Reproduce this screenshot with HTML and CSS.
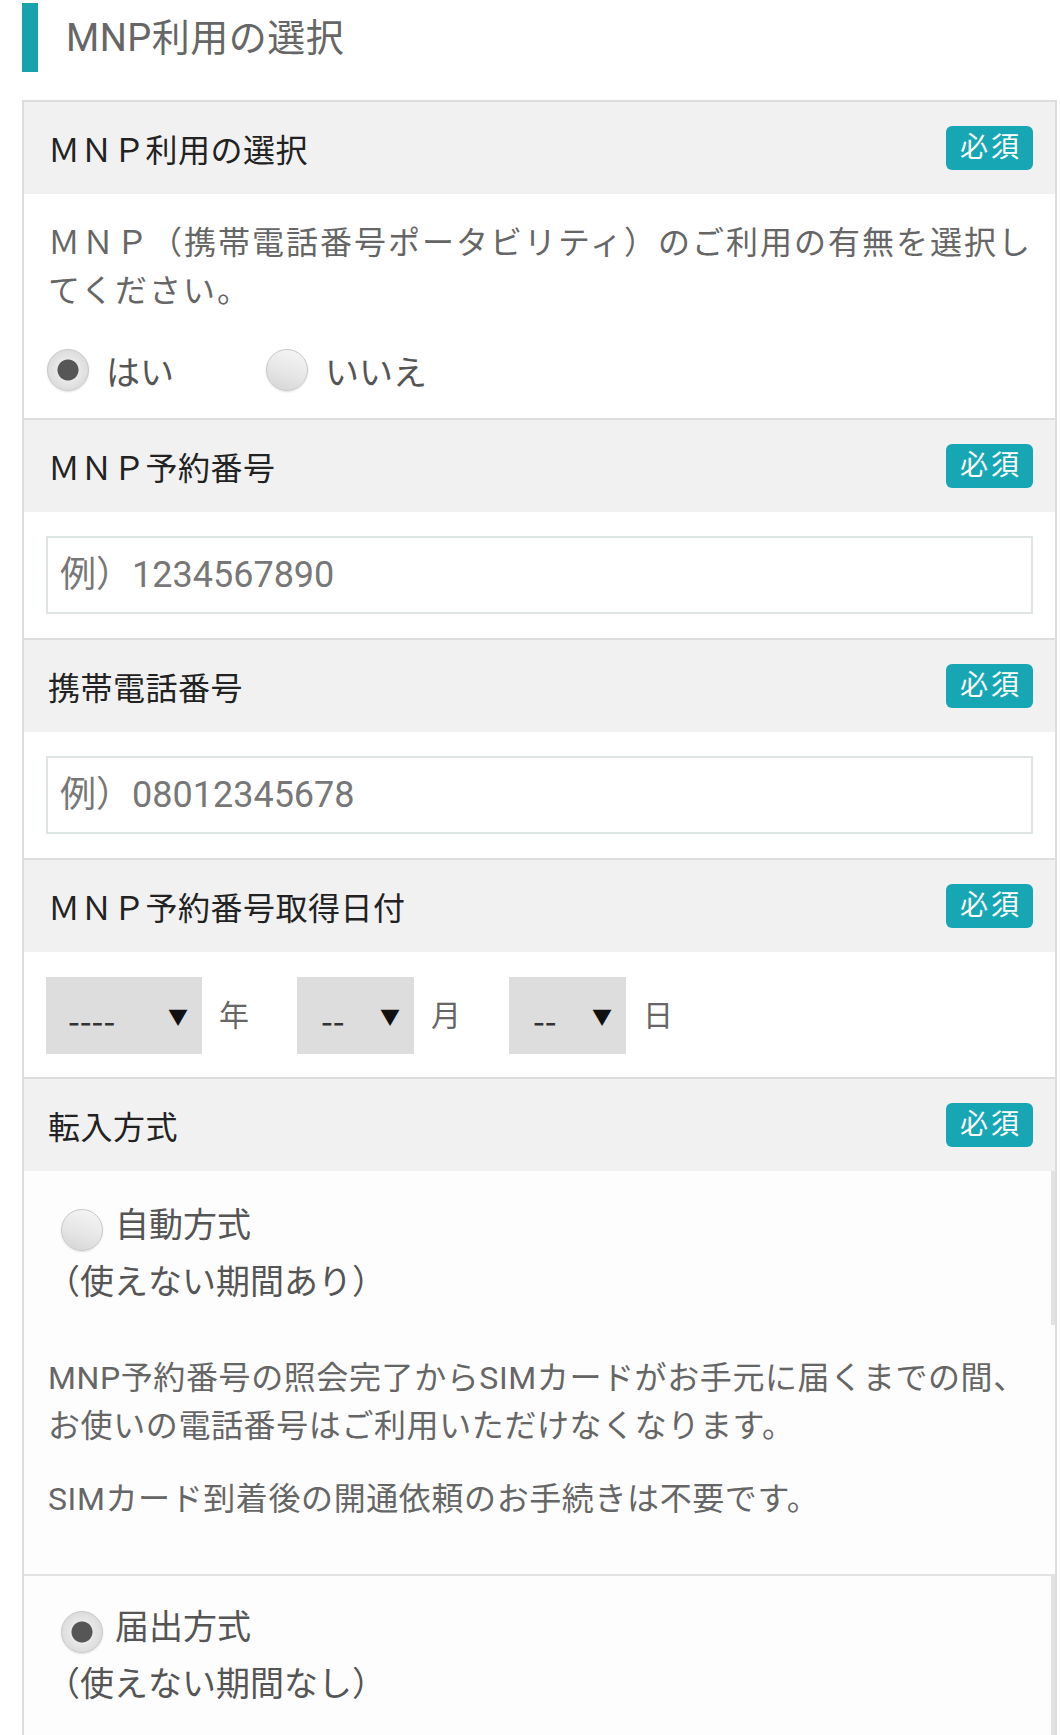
FILE: index.html
```html
<!DOCTYPE html>
<html lang="ja">
<head>
<meta charset="utf-8">
<title>MNP利用の選択</title>
<link rel="stylesheet" href="styles.css">
</head>
<body>
<div class="page">
  <h1 class="title">MNP利用の選択</h1>

  <div class="form">
    <section class="section">
      <div class="sec-head">
        <h2>ＭＮＰ利用の選択</h2>
        <span class="badge">必須</span>
      </div>
      <div class="sec-body sec-body-mnp">
        <p class="desc">ＭＮＰ（携帯電話番号ポータビリティ）のご利用の有無を選択し<br>てください。</p>
        <div class="choices">
          <label class="choice"><input class="radio" type="radio" name="mnp" checked><span>はい</span></label>
          <label class="choice"><input class="radio" type="radio" name="mnp"><span>いいえ</span></label>
        </div>
      </div>
    </section>

    <section class="section">
      <div class="sec-head">
        <h2>ＭＮＰ予約番号</h2>
        <span class="badge">必須</span>
      </div>
      <div class="sec-body sec-body-input">
        <input class="text-input" type="text" placeholder="例）1234567890">
      </div>
    </section>

    <section class="section">
      <div class="sec-head">
        <h2>携帯電話番号</h2>
        <span class="badge">必須</span>
      </div>
      <div class="sec-body sec-body-input">
        <input class="text-input" type="text" placeholder="例）08012345678">
      </div>
    </section>

    <section class="section">
      <div class="sec-head">
        <h2>ＭＮＰ予約番号取得日付</h2>
        <span class="badge">必須</span>
      </div>
      <div class="sec-body sec-body-date">
        <div class="select select-year">
          <select><option>----</option></select>
          <span class="arrow">▼</span>
        </div>
        <span class="unit">年</span>
        <div class="select select-short">
          <select><option>--</option></select>
          <span class="arrow">▼</span>
        </div>
        <span class="unit">月</span>
        <div class="select select-short">
          <select><option>--</option></select>
          <span class="arrow">▼</span>
        </div>
        <span class="unit">日</span>
      </div>
    </section>

    <section class="section">
      <div class="sec-head">
        <h2>転入方式</h2>
        <span class="badge">必須</span>
      </div>
      <div class="sec-body sec-body-method">
        <div class="option">
          <label class="option-head"><input class="radio radio-inline" type="radio" name="method"><span class="option-name">自動方式</span><br>（使えない期間あり）</label>
          <div class="option-desc">
            <p>MNP予約番号の照会完了からSIMカードがお手元に届くまでの間、<br>お使いの電話番号はご利用いただけなくなります。</p>
            <p>SIMカード到着後の開通依頼のお手続きは不要です。</p>
          </div>
        </div>
        <div class="option option-second">
          <label class="option-head"><input class="radio radio-inline" type="radio" name="method" checked><span class="option-name">届出方式</span><br>（使えない期間なし）</label>
        </div>
      </div>
    </section>
  </div>
</div>
</body>
</html>
```

FILE: styles.css
```css
* {
  box-sizing: border-box;
}

body {
  margin: 0;
  background: #ffffff;
  font-family: Roboto, "Noto Sans CJK JP", "Noto Sans", sans-serif;
  color: #333;
}

.page {
  padding: 3px 3px 0 22px;
}

.title {
  display: flex;
  align-items: center;
  height: 69px;
  margin: 0 0 28px;
  padding-left: 28px;
  border-left: 16px solid #17a2ad;
  font-size: 38px;
  font-weight: normal;
  color: #666;
  line-height: 1;
  letter-spacing: 0.5px;
}

.form {
  border: 2px solid #dddddd;
}

.section + .section {
  border-top: 2px solid #dddddd;
}

.sec-head {
  height: 92px;
  background: #f1f1f1;
  display: flex;
  align-items: center;
  justify-content: space-between;
  padding: 0 22px 0 24px;
}

.sec-head h2 {
  margin: 0;
  font-size: 32px;
  font-weight: normal;
  color: #222;
  letter-spacing: 0.5px;
}

.badge {
  width: 87px;
  height: 44px;
  border-radius: 6px;
  background: #17a6b3;
  color: #fff;
  font-size: 28px;
  letter-spacing: 3px;
  padding-left: 3px;
  display: flex;
  align-items: center;
  justify-content: center;
  line-height: 1;
}

.sec-body-mnp {
  padding: 25px 10px 28px 24px;
}

.desc {
  margin: 0 0 35px;
  font-size: 32px;
  line-height: 48px;
  letter-spacing: 2px;
  color: #666;
  white-space: nowrap;
}

.choices {
  display: flex;
  align-items: center;
  height: 40px;
}

.choice {
  display: flex;
  align-items: center;
  gap: 17px;
  width: 220px;
  margin-left: -1px;
  font-size: 34px;
  color: #555;
}

.radio {
  appearance: none;
  -webkit-appearance: none;
  width: 42px;
  height: 42px;
  margin: 0;
  flex: none;
  border-radius: 50%;
  border: 1px solid #c9c9c9;
  background: linear-gradient(200deg, #f7f7f7 0%, #e6e6e6 55%, #d4d4d4 100%);
  box-shadow: 0 1px 2px rgba(0, 0, 0, 0.12);
}

.radio:checked {
  background:
    radial-gradient(circle, #565656 0 10px, #e9e9e9 11px, #e4e4e4 14px, #d2d2d2 100%);
}

.sec-body-input {
  padding: 24px 22px 24px 22px;
}

.text-input {
  display: block;
  width: 100%;
  height: 78px;
  margin: 0;
  padding: 0 12px;
  border: 2px solid #dfe5e5;
  background: #fff;
  font-family: Roboto, "Noto Sans CJK JP", "Noto Sans", sans-serif;
  font-size: 36px;
  color: #333;
  outline: none;
}

.text-input::placeholder {
  color: #777;
}

.sec-body-date {
  display: flex;
  align-items: center;
  padding: 25px 22px 23px 22px;
}

.select {
  position: relative;
  height: 77px;
  background: #dddddd;
}

.select-year {
  width: 156px;
}

.select-short {
  width: 117px;
}

.select select {
  appearance: none;
  -webkit-appearance: none;
  width: 100%;
  height: 100%;
  margin: 0;
  border: none;
  background: transparent;
  padding: 8px 0 0 22px;
  font-family: "Noto Sans CJK JP", "Noto Sans", sans-serif;
  font-size: 34px;
  color: #333;
}

.select-short select {
  padding-left: 24px;
}

.arrow {
  position: absolute;
  right: 14px;
  top: 50%;
  transform: translateY(-50%);
  font-family: "Noto Sans CJK JP", "DejaVu Sans", sans-serif;
  font-size: 20px;
  color: #111;
  pointer-events: none;
}

.unit {
  margin: 0 48px 6px 17px;
  font-size: 30px;
  color: #666;
}

.unit:last-child {
  margin-right: 0;
}

.sec-body-method {
  background: #fdfdfd;
}

.option-head {
  display: block;
  padding: 26px 0 14px 22px;
  border-right: 4px solid #e2e2e2;
  font-size: 34px;
  line-height: 57px;
  color: #555;
}

.radio-inline {
  display: inline-block;
  margin: 0 12px 0 15px;
  vertical-align: -14px;
}

.option-desc {
  padding: 29px 22px 51px 24px;
}

.option-desc p {
  margin: 0;
  font-size: 32px;
  line-height: 48px;
  letter-spacing: 0.6px;
  color: #666;
  white-space: nowrap;
}

.option-desc p + p {
  margin-top: 25px;
}

.option-second {
  border-top: 2px solid #e2e2e2;
}

.option-second .option-head {
  padding-top: 23px;
  padding-bottom: 40px;
}
```
